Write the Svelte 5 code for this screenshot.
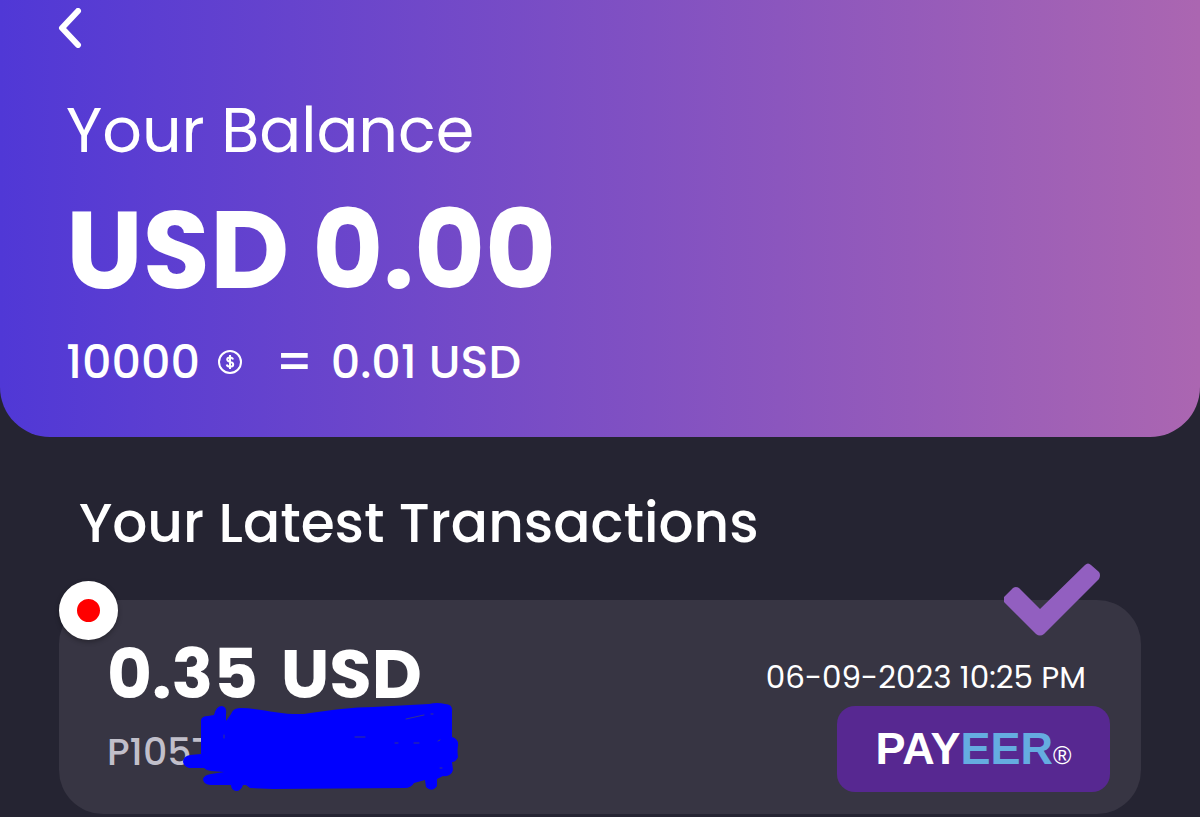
<script>
  const balance = '0.00';
  const rate = { coins: 10000, usd: '0.01' };

  const transactions = [
    { id: 1, amount: '0.35', currency: 'USD', account: 'P1057', date: '06-09-2023 10:25 PM' }
  ];
</script>

<main>
  <header class="balance">
    <button class="back" aria-label="Back">
      <svg viewBox="0 0 24 40" width="24" height="40">
        <path d="M20 3 L4 20 L20 37" />
      </svg>
    </button>
    <p class="label">Your Balance</p>
    <p class="total">USD {balance}</p>
    <p class="rate">
      <span>{rate.coins}</span>
      <svg class="coin" viewBox="0 0 26 26" width="26" height="26" aria-hidden="true">
        <circle cx="13" cy="13" r="11" />
        <path d="M16 10.5 C15.6 9 14.6 8.4 13 8.4 C11.2 8.4 10.2 9.2 10.2 10.4 C10.2 13.4 16.2 12.2 16.2 15.4 C16.2 16.8 15 17.6 13 17.6 C11.2 17.6 10 16.9 9.7 15.5 M13 6 V20" />
      </svg>
      <span class="equals">=</span>
      <span>{rate.usd} USD</span>
    </p>
  </header>

  <section>
    <h1>Your Latest Transactions</h1>

    {#each transactions as item (item.id)}
      <article class="card">
        <span class="status"></span>
        <svg class="check" viewBox="0 0 97 73" width="97" height="73" aria-hidden="true">
          <path d="M0 34 L9 25 Q12 23 15 25 L36 46 L81 2 Q84 -1 87 2 L95 9 Q97 12 95 16 L40 71 Q36 74 32 71 L0 39 Z" />
        </svg>

        <div class="info">
          <h2>{item.amount} <span class="currency">{item.currency}</span></h2>
          <div class="account">
            {item.account}
            <svg class="scribble" viewBox="0 0 276 90" width="276" height="90" aria-hidden="true">
              <path d="M18 18 Q19 14 25 14 L31 13 Q33 4 39 4 Q44 5 43 12 L43 19 L48 12 Q50 6 57 6 C78 6 97 13 121 12 C148 8 170 5 190 5 L246 2 Q254 0 262 2 Q270 2 269 10 L269 35 Q276 37 275 44 Q274 48 275 55 Q273 60 269 60 L270 68 Q268 75 260 74 L254 77 L254 84 Q249 91 243 85 L242 78 L231 81 Q228 86 222 86 L90 87 L67 86 L63 83 L60 83 Q58 89 53 89 Q48 88 48 83 L27 83 Q20 82 20 77 Q21 73 28 72 L41 70 L28 69 Q24 69 21 66 L6 66 Q0 64 0 59 Q1 54 7 53 L18 52 Z" />
              <path class="gap" d="M172 35 H182 M212 41 H215 M231 41 H236 M255 39 L257 38 M257 66 H259 M223 17 L241 13 M248 12 H250 M41 33 V36" />
            </svg>
          </div>
        </div>

        <div class="payment">
          <time>{item.date}</time>
          <div class="payeer"><span class="pay">PAY</span><span class="eer">EER</span><span class="reg">®</span></div>
        </div>
      </article>
    {/each}
  </section>
</main>

<style>
  :global(body) {
    background: #252432;
    color: #fff;
    font-family: Poppins, Inter, sans-serif;
  }

  p, h1, h2 {
    margin: 0;
  }

  .balance {
    padding: 8px 66px 47px;
    border-radius: 0 0 50px 50px;
    background: linear-gradient(90deg, #5038d6, #ab66b1);
  }

  .back {
    display: block;
    margin: 0 0 47px -8px;
    padding: 0;
    border: 0;
    background: none;
    height: 40px;
    cursor: pointer;
  }

  .back path {
    fill: none;
    stroke: #fff;
    stroke-width: 6;
    stroke-linecap: round;
    stroke-linejoin: round;
  }

  .label {
    font-size: 62px;
    line-height: 72px;
  }

  .total {
    margin-top: 23px;
    font-size: 109px;
    font-weight: 700;
    line-height: 120px;
  }

  .rate {
    display: flex;
    align-items: center;
    margin-top: 24px;
    font-size: 46px;
    font-weight: 500;
    line-height: 56px;
  }

  .coin {
    margin: 0 32px 0 17px;
  }

  .coin circle, .coin path {
    fill: none;
    stroke: #fff;
    stroke-width: 2;
  }

  .equals {
    margin-right: 17px;
    font-size: 50px;
  }

  section {
    padding: 54px 59px 0;
  }

  h1 {
    margin: 0 20px 45px;
    font-size: 55px;
    font-weight: 500;
    line-height: 64px;
  }

  .card {
    position: relative;
    display: flex;
    justify-content: space-between;
    padding: 34px 31px 22px 48px;
    border-radius: 44px;
    background: #373543;
  }

  .status {
    position: absolute;
    top: -19px;
    left: 0;
    box-sizing: border-box;
    width: 59px;
    height: 59px;
    border: 18px solid #fff;
    border-radius: 50%;
    background: #f00;
    box-shadow: 0 2px 5px rgba(0, 0, 0, 0.3);
  }

  .check {
    position: absolute;
    top: -37px;
    right: 40px;
    fill: #925fc0;
  }

  h2 {
    font-size: 69px;
    font-weight: 700;
    line-height: 80px;
  }

  .currency {
    margin-left: 8px;
  }

  .account {
    position: relative;
    margin: 14px 0 16px;
    color: #c1bfca;
    font-size: 38px;
    font-weight: 500;
    line-height: 48px;
  }

  .scribble {
    position: absolute;
    top: -26px;
    left: 76px;
    fill: #00f;
  }

  .gap {
    stroke: #33358f;
    stroke-width: 1;
    stroke-linecap: round;
  }

  .payment {
    display: flex;
    flex-direction: column;
    align-items: flex-end;
    justify-content: flex-end;
  }

  time {
    margin: 0 24px 9px 0;
    font-size: 31px;
    line-height: 40px;
  }

  .payeer {
    display: flex;
    align-items: baseline;
    justify-content: center;
    box-sizing: border-box;
    width: 273px;
    height: 86px;
    border-radius: 18px;
    background: #572891;
    font-family: "Liberation Sans", Arial, sans-serif;
    font-size: 45px;
    font-weight: 700;
    line-height: 86px;
  }

  .eer {
    color: #65ace0;
  }

  .reg {
    font-size: 25px;
    font-weight: 400;
  }
</style>
